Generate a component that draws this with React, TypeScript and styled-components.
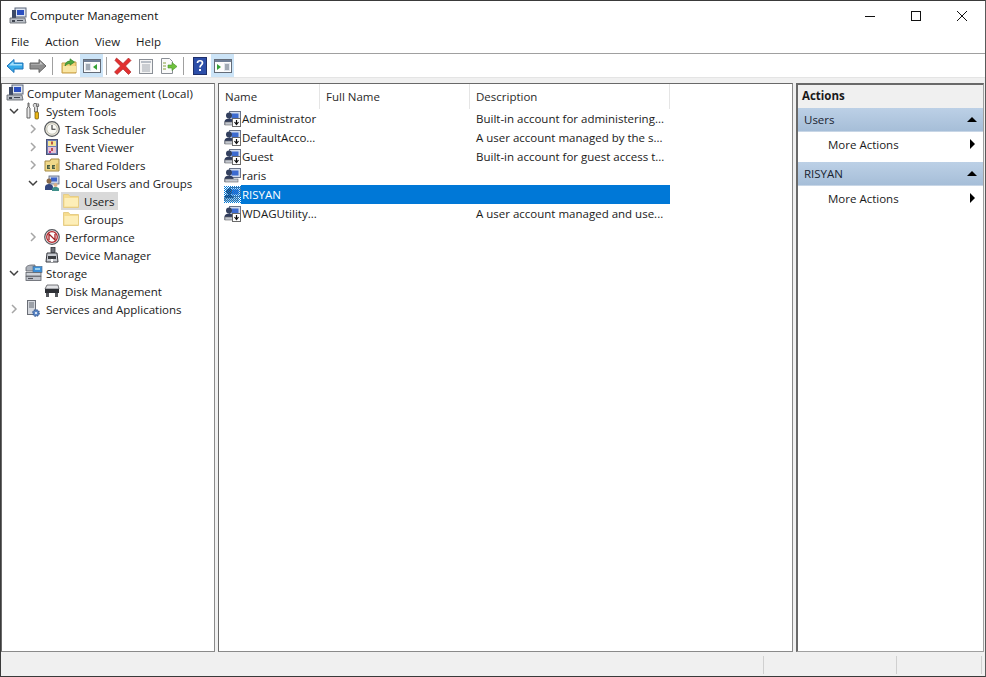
import React from 'react';
import styled, { createGlobalStyle } from 'styled-components';

const GlobalStyle = createGlobalStyle`
    html, body {
        margin: 0;
        padding: 0;
        background: #f0f0f0;
    }
    * {
        box-sizing: border-box;
    }
`;

/* ---------- icons ---------- */

function ComputerIcon() {
    return (
        <svg width="18" height="18" viewBox="0 0 18 18">
            <rect x="6" y="1" width="11" height="9" fill="#dfe6f2" stroke="#5a6478" />
            <rect x="8" y="3" width="7" height="5" fill="#2a4fc0" />
            <path d="M3 3h4v9H3z" fill="#3d4a66" />
            <path d="M1 11h15l1 5H1z" fill="#b9bec6" stroke="#5c6068" strokeWidth="0.8" />
            <path d="M3 13h3v2H3zM8 13h6v1H8z" fill="#404652" />
        </svg>
    );
}

function ToolsIcon() {
    return (
        <svg width="16" height="18" viewBox="0 0 16 18">
            <path d="M3 1v4l-1 1v10h3V6L4 5V1z" fill="#e8e8e8" stroke="#555" strokeWidth="0.9" />
            <path d="M9 1.500c-1 1-1 3 .5 4V10h3V5.500c1.500-1 1.500-3 .5-4v3h-1.500V1.500z" fill="#d8d8d8" stroke="#555" strokeWidth="0.8" />
            <rect x="10" y="10" width="3.500" height="7" rx="1" fill="#e8b417" stroke="#6a5200" strokeWidth="0.7" />
        </svg>
    );
}

function ClockIcon() {
    return (
        <svg width="16" height="16" viewBox="0 0 16 16">
            <circle cx="8" cy="8" r="7.300" fill="#e9e6d8" stroke="#55585c" strokeWidth="1.200" />
            <circle cx="8" cy="8" r="5.200" fill="#fbfbf6" stroke="#a8a89c" strokeWidth="0.6" />
            <path d="M8 4v4.300h3.500" fill="none" stroke="#333" strokeWidth="1.100" />
        </svg>
    );
}

function EventIcon() {
    return (
        <svg width="16" height="16" viewBox="0 0 16 16">
            <rect x="2.500" y="0.500" width="11" height="15" fill="#6f80b8" stroke="#4d5475" />
            <rect x="4" y="2" width="8" height="5" fill="#f4e596" />
            <rect x="4" y="8" width="8" height="6" fill="#e7c3d4" />
            <path d="M8 2.500v3M8 9v3" stroke="#b03030" strokeWidth="1.600" />
            <rect x="5" y="12" width="2" height="2" fill="#c03a8a" />
        </svg>
    );
}

function SharedIcon() {
    return (
        <svg width="16" height="16" viewBox="0 0 16 16">
            <path d="M1 4h5l1-2h8v12H1z" fill="#f0d98a" stroke="#a58a44" />
            <path d="M3 8h3v1.500H4.500v1H6V12H3zM8 8h3v1.500H9.500v1H11V12H8z" fill="#4a5f45" />
            <path d="M12 7l2-1v7h-2z" fill="#d9b95e" />
        </svg>
    );
}

function GroupIcon() {
    return (
        <svg width="16" height="16" viewBox="0 0 16 16">
            <rect x="5" y="1" width="10" height="8" fill="#c9d3e8" stroke="#5a6478" strokeWidth="0.8" />
            <rect x="7" y="2.500" width="6" height="4" fill="#3e63c8" />
            <circle cx="5" cy="6" r="2.500" fill="#8a6a4a" />
            <path d="M1 15v-3c0-2 2-3 4-3s4 1 4 3v3z" fill="#33477f" />
            <circle cx="11.500" cy="10" r="2" fill="#d9b08a" />
            <path d="M8 16v-2c0-1.500 2-2 3.500-2s3.500.5 3.500 2v2z" fill="#3f8f8a" />
        </svg>
    );
}

function FolderIcon() {
    return (
        <svg width="16" height="16" viewBox="0 0 16 16">
            <path d="M.5 1.500h5l1.500 2h8.500v11H.5z" fill="#f6dc8e" stroke="#e6cd87" />
            <path d="M1.500 5h13.500v8.500H1.500z" fill="#fdeeb8" />
        </svg>
    );
}

function PerfIcon() {
    return (
        <svg width="16" height="16" viewBox="0 0 16 16">
            <circle cx="8" cy="8" r="7.300" fill="#f6eeee" stroke="#54565c" strokeWidth="1.200" />
            <circle cx="8" cy="8" r="5.300" fill="#fff" stroke="#b3282d" strokeWidth="1.300" />
            <path d="M5 11V5l6 6V5" fill="none" stroke="#a12024" strokeWidth="1.300" />
        </svg>
    );
}

function DeviceIcon() {
    return (
        <svg width="16" height="16" viewBox="0 0 16 16">
            <rect x="7" y="0.500" width="4" height="5" fill="#6e7178" stroke="#33363c" strokeWidth="0.8" />
            <path d="M3 6h10l1 9H2z" fill="#c9ccd2" stroke="#36383e" />
            <rect x="4" y="9" width="8" height="3" fill="#3b3d42" />
            <path d="M7 12h2v3H7z" fill="#fff" />
        </svg>
    );
}

function StorageIcon() {
    return (
        <svg width="18" height="18" viewBox="0 0 18 18">
            <path d="M1 4c0-2 3-3 6-3h3v6H1z" fill="#aeb3bb" stroke="#5d6068" strokeWidth="0.8" />
            <rect x="8" y="2.500" width="9" height="6" fill="#3c8fd8" stroke="#4a6f95" strokeWidth="0.7" />
            <path d="M10 5h5" stroke="#dff" strokeWidth="1.200" />
            <rect x="1" y="8.500" width="15" height="3.500" fill="#ced2d8" stroke="#5d6068" strokeWidth="0.8" />
            <rect x="1" y="12.500" width="15" height="4" fill="#bfc3ca" stroke="#5d6068" strokeWidth="0.8" />
            <path d="M3 14.500h5" stroke="#50545c" strokeWidth="1.200" />
        </svg>
    );
}

function DiskIcon() {
    return (
        <svg width="16" height="16" viewBox="0 0 16 16">
            <path d="M3 2h11l1 4H1z" fill="#e2e3e6" stroke="#55575c" strokeWidth="0.8" />
            <rect x="1" y="6" width="14" height="4" fill="#2e3035" />
            <rect x="2" y="10" width="3" height="4" fill="#55575c" />
            <rect x="11" y="10" width="3" height="4" fill="#55575c" />
        </svg>
    );
}

function ServicesIcon() {
    return (
        <svg width="16" height="18" viewBox="0 0 16 18">
            <rect x="2.500" y="0.500" width="8" height="14" fill="#d5d8de" stroke="#6a6e76" />
            <path d="M4 3h5M4 5h5M4 7h5" stroke="#656a72" />
            <circle cx="11" cy="13" r="3.200" fill="#5a86c6" stroke="#3f5f94" strokeDasharray="1.500 1" strokeWidth="1.300" />
            <circle cx="11" cy="13" r="1" fill="#fff" />
        </svg>
    );
}

interface UserIconProps {
    $down?: boolean;
    $selected?: boolean;
}

function UserIcon({ $down, $selected }: UserIconProps) {
    return (
        <svg width="17" height="17" viewBox="0 0 17 17">
            <defs>
                <pattern id="hatch" width="2" height="2" patternUnits="userSpaceOnUse">
                    <rect width="1" height="1" fill="#0078d7" />
                    <rect x="1" y="1" width="1" height="1" fill="#0078d7" />
                </pattern>
            </defs>
            <rect x="5.500" y="1.500" width="11" height="9" fill="#d3dcec" stroke="#69748a" />
            <rect x="7.500" y="3.500" width="7" height="5" fill="#3d6bcf" />
            <circle cx="5" cy="5.500" r="3" fill="#33405f" />
            <path d="M.5 15v-3.500C.5 9.500 3 8.500 5 8.500s4.500 1 4.500 3V15z" fill="#303c5c" />
            <rect x="1" y="12" width="13" height="3" fill="#c4c8d0" stroke="#666" strokeWidth="0.6" />
            {$down && (
                <g>
                    <rect x="8.500" y="8.500" width="8" height="8" fill="#fff" stroke="#6a6a6a" />
                    <path d="M12.500 10v4M10.500 12l2 2.500 2-2.500" fill="none" stroke="#111" strokeWidth="1.200" />
                </g>
            )}
            {$selected && <rect width="17" height="17" fill="url(#hatch)" />}
        </svg>
    );
}

function BackIcon() {
    return (
        <svg width="18" height="16" viewBox="0 0 18 16">
            <path d="M1 8l7-6.500V5h9v6H8v3.500z" fill="#36a9e8" stroke="#1c72b8" />
            <path d="M3 7.500L7.500 3.500V6H16v1.500z" fill="#a7e0fb" />
        </svg>
    );
}

function ForwardIcon() {
    return (
        <svg width="18" height="16" viewBox="0 0 18 16">
            <path d="M17 8l-7-6.500V5H1v6h9v3.500z" fill="#8e8e8e" stroke="#666" />
            <path d="M2 6h9V3.500l3 3H2z" fill="#c6c6c6" />
        </svg>
    );
}

function UpIcon() {
    return (
        <svg width="16" height="16" viewBox="0 0 16 16">
            <path d="M1 5h5l1-1h8v11H1z" fill="#f2d27a" stroke="#c49d4b" />
            <path d="M2 8h13v6H2z" fill="#f9e6a4" />
            <path d="M4 8c0-3 2-5 5-5V0.800L13.500 4 9 7.200V5.500C7 5.500 5.500 6.500 4 8z" fill="#4fa83f" stroke="#2c7a27" strokeWidth="0.6" />
        </svg>
    );
}

function ConsoleTreeIcon() {
    return (
        <svg width="18" height="16" viewBox="0 0 18 16">
            <rect x="0.500" y="1.500" width="17" height="13" fill="#fdfdfd" stroke="#646c78" />
            <rect x="1" y="2" width="16" height="2" fill="#6f7f96" />
            <rect x="2" y="5" width="6" height="8" fill="#dfe5ec" />
            <path d="M3 7h4M3 9h4M3 11h4" stroke="#64717f" />
            <path d="M14 6v6l-4-3z" fill="#35a235" />
        </svg>
    );
}

function DeleteIcon() {
    return (
        <svg width="18" height="18" viewBox="0 0 18 18">
            <path d="M2.500 1L9 6.500 14.500 1 17 3.500 11.500 9 17 15l-2.500 2.500L9 12l-6 5.500L.5 15 6.500 9 1 3.500z" fill="#e23030" stroke="#a51f1f" strokeWidth="0.6" />
        </svg>
    );
}

function PropertiesIcon() {
    return (
        <svg width="16" height="16" viewBox="0 0 16 16">
            <rect x="1.500" y="1.500" width="13" height="14" fill="#f5f5f5" stroke="#8a8f96" />
            <rect x="3" y="3" width="10" height="2" fill="#b8bec6" />
            <path d="M4 7h8M4 9h8M4 11h8M4 13h8" stroke="#a0a6ae" />
        </svg>
    );
}

function ExportIcon() {
    return (
        <svg width="18" height="16" viewBox="0 0 18 16">
            <path d="M1.500.5h8l3 3v12h-11z" fill="#fafafa" stroke="#8a8f96" />
            <path d="M3 5h3M3 8h3M3 11h3" stroke="#86a03a" />
            <path d="M8 7h4V4.500L17 8.500l-5 4V10H8z" fill="#6fc13e" stroke="#45902a" strokeWidth="0.6" />
        </svg>
    );
}

function HelpIcon() {
    return (
        <svg width="14" height="18" viewBox="0 0 14 18">
            <rect x="0.500" y="0.500" width="13" height="17" fill="#2c4ea8" stroke="#1e2f6a" />
            <path d="M4.500 6c0-3 5-3 5 0 0 2-2.500 2-2.500 4.500" fill="none" stroke="#fff" strokeWidth="1.700" />
            <rect x="6" y="12" width="2" height="2" fill="#fff" />
        </svg>
    );
}

function ActionPaneIcon() {
    return (
        <svg width="18" height="16" viewBox="0 0 18 16">
            <rect x="0.500" y="1.500" width="17" height="13" fill="#fdfdfd" stroke="#646c78" />
            <rect x="1" y="2" width="16" height="2" fill="#6f7f96" />
            <path d="M3 6v6l4-3z" fill="#35a235" />
            <rect x="10" y="5" width="6" height="8" fill="#dfe5ec" />
            <path d="M11 7h4M11 9h4M11 11h4" stroke="#64717f" />
        </svg>
    );
}

function Chevron({ $open }: { $open: boolean }) {
    return (
        <svg width="12" height="12" viewBox="0 0 12 12">
            {$open ? (
                <path d="M2 4l4 4 4-4" fill="none" stroke="#404040" strokeWidth="1.500" />
            ) : (
                <path d="M4 2l4 4-4 4" fill="none" stroke="#a6a6a6" strokeWidth="1.500" />
            )}
        </svg>
    );
}

/* ---------- data ---------- */

interface TreeEntry {
    label: string;
    indent: number;
    icon: React.ReactNode;
    open?: boolean;
    selected?: boolean;
}

const treeEntries: TreeEntry[] = [
    { label: 'System Tools', indent: 7, icon: <ToolsIcon />, open: true },
    { label: 'Task Scheduler', indent: 26, icon: <ClockIcon />, open: false },
    { label: 'Event Viewer', indent: 26, icon: <EventIcon />, open: false },
    { label: 'Shared Folders', indent: 26, icon: <SharedIcon />, open: false },
    { label: 'Local Users and Groups', indent: 26, icon: <GroupIcon />, open: true },
    { label: 'Users', indent: 45, icon: <FolderIcon />, selected: true },
    { label: 'Groups', indent: 45, icon: <FolderIcon /> },
    { label: 'Performance', indent: 26, icon: <PerfIcon />, open: false },
    { label: 'Device Manager', indent: 26, icon: <DeviceIcon /> },
    { label: 'Storage', indent: 7, icon: <StorageIcon />, open: true },
    { label: 'Disk Management', indent: 26, icon: <DiskIcon /> },
    { label: 'Services and Applications', indent: 7, icon: <ServicesIcon />, open: false },
];

const users = [
    { name: 'Administrator', description: 'Built-in account for administering...', down: true },
    { name: 'DefaultAcco...', description: 'A user account managed by the s...', down: true },
    { name: 'Guest', description: 'Built-in account for guest access t...', down: true },
    { name: 'raris', description: '', down: false },
    { name: 'RISYAN', description: '', down: false, selected: true },
    { name: 'WDAGUtility...', description: 'A user account managed and use...', down: true },
];

/* ---------- page ---------- */

export default function App() {
    return (
        <>
            <GlobalStyle />
            <Window>
                <TitleBar>
                    <ComputerIcon />
                    <TitleText>Computer Management</TitleText>
                    <WindowControls>
                        <WindowButton>
                            <svg width="10" height="10" viewBox="0 0 10 10">
                                <path d="M0 5.500h10" stroke="#111" />
                            </svg>
                        </WindowButton>
                        <WindowButton>
                            <svg width="10" height="10" viewBox="0 0 10 10">
                                <rect x="0.500" y="0.500" width="9" height="9" fill="none" stroke="#111" />
                            </svg>
                        </WindowButton>
                        <WindowButton>
                            <svg width="10" height="10" viewBox="0 0 10 10">
                                <path d="M0 0l10 10M10 0L0 10" stroke="#111" />
                            </svg>
                        </WindowButton>
                    </WindowControls>
                </TitleBar>

                <MenuBar>
                    <MenuItem>File</MenuItem>
                    <MenuItem>Action</MenuItem>
                    <MenuItem>View</MenuItem>
                    <MenuItem>Help</MenuItem>
                </MenuBar>

                <Toolbar>
                    <ToolButton><BackIcon /></ToolButton>
                    <ToolButton><ForwardIcon /></ToolButton>
                    <ToolSeparator />
                    <ToolButton><UpIcon /></ToolButton>
                    <ToolButton $active><ConsoleTreeIcon /></ToolButton>
                    <ToolSeparator />
                    <ToolButton><DeleteIcon /></ToolButton>
                    <ToolButton><PropertiesIcon /></ToolButton>
                    <ToolButton><ExportIcon /></ToolButton>
                    <ToolSeparator />
                    <ToolButton><HelpIcon /></ToolButton>
                    <ToolButton $active><ActionPaneIcon /></ToolButton>
                </Toolbar>

                <Panes>
                    <TreePane>
                        <RootRow>
                            <ComputerIcon />
                            <span>Computer Management (Local)</span>
                        </RootRow>
                        {treeEntries.map((entry) => (
                            <TreeRow key={entry.label} $indent={entry.indent}>
                                <ChevronSlot>
                                    {entry.open !== undefined && <Chevron $open={entry.open} />}
                                </ChevronSlot>
                                <TreeItem $selected={entry.selected}>
                                    <TreeIconSlot>{entry.icon}</TreeIconSlot>
                                    <TreeLabel>{entry.label}</TreeLabel>
                                </TreeItem>
                            </TreeRow>
                        ))}
                    </TreePane>

                    <ListPane>
                        <ListHeader>
                            <HeaderCell $width={101}>Name</HeaderCell>
                            <HeaderCell $width={150}>Full Name</HeaderCell>
                            <HeaderCell $width={200}>Description</HeaderCell>
                        </ListHeader>
                        {users.map((user) => (
                            <UserRow key={user.name}>
                                <UserIconSlot>
                                    <UserIcon $down={user.down} $selected={user.selected} />
                                </UserIconSlot>
                                <UserCells $selected={user.selected}>
                                    <NameCell>{user.name}</NameCell>
                                    <DescriptionCell>{user.description}</DescriptionCell>
                                </UserCells>
                            </UserRow>
                        ))}
                    </ListPane>

                    <ActionsPane>
                        <ActionsTitle>Actions</ActionsTitle>
                        <ActionSection>
                            <SectionHeader>
                                Users
                                <CollapseArrow />
                            </SectionHeader>
                            <ActionItem>
                                More Actions
                                <ExpandArrow />
                            </ActionItem>
                        </ActionSection>
                        <ActionSection>
                            <SectionHeader>
                                RISYAN
                                <CollapseArrow />
                            </SectionHeader>
                            <ActionItem>
                                More Actions
                                <ExpandArrow />
                            </ActionItem>
                        </ActionSection>
                    </ActionsPane>
                </Panes>

                <StatusBar>
                    <StatusCell $width={133} />
                    <StatusCell $width={85} />
                    <StatusEnd />
                </StatusBar>
            </Window>
        </>
    );
}

const Window = styled.div`
    display: flex;
    flex-direction: column;
    width: 986px;
    height: 677px;
    overflow: hidden;
    background: #f0f0f0;
    border: 1px solid #3a3a3a;
    border-right-color: #5a5a5a;
    font-family: 'Open Sans', 'Noto Sans', sans-serif;
    font-size: 11.5px;
    color: #1a1a1a;
`;

const TitleBar = styled.div`
    display: flex;
    align-items: center;
    flex: none;
    height: 29px;
    padding-left: 8px;
    background: #fff;
`;

const TitleText = styled.span`
    margin-left: 3px;
    color: #111;
`;

const WindowControls = styled.div`
    display: flex;
    margin-left: auto;
    align-self: stretch;
`;

const WindowButton = styled.div`
    display: flex;
    align-items: center;
    justify-content: center;
    width: 46px;
`;

const MenuBar = styled.div`
    display: flex;
    align-items: center;
    flex: none;
    height: 24px;
    padding-left: 2px;
    background: #fff;
    border-bottom: 1px solid #a0a0a0;
`;

const MenuItem = styled.span`
    padding: 0 8px;
`;

const Toolbar = styled.div`
    display: flex;
    align-items: center;
    flex: none;
    height: 24px;
    padding-left: 2px;
    background: #fff;
    border-bottom: 1px solid #e4e4e4;
`;

const ToolButton = styled.div<{ $active?: boolean }>`
    display: flex;
    align-items: center;
    justify-content: center;
    width: 23px;
    height: 23px;
    background: ${(p) => (p.$active ? '#cce4f7' : 'transparent')};
`;

const ToolSeparator = styled.div`
    width: 1px;
    height: 18px;
    margin: 0 4px 0 3px;
    background: #a0a0a0;
`;

const Panes = styled.div`
    display: flex;
    flex: 1;
    min-height: 0;
    gap: 3px;
    padding: 5px 1px 2px 0;
`;

const TreePane = styled.div`
    flex: none;
    width: 214px;
    background: #fff;
    border: 1px solid #8a8a8a;
    border-top-color: #696969;
    border-left-color: #696969;
`;

const RootRow = styled.div`
    display: flex;
    align-items: center;
    gap: 3px;
    height: 18px;
    padding-left: 4px;
    white-space: nowrap;
`;

const TreeRow = styled.div<{ $indent: number }>`
    display: flex;
    align-items: center;
    height: 18px;
    padding-left: ${(p) => p.$indent - 1}px;
    white-space: nowrap;
`;

const ChevronSlot = styled.span`
    display: flex;
    flex: none;
    width: 12px;
    height: 12px;
    margin-right: 3px;
`;

const TreeItem = styled.span<{ $selected?: boolean }>`
    display: flex;
    align-items: center;
    height: 18px;
    padding-left: 2px;
    background: ${(p) => (p.$selected ? '#d9d9d9' : 'transparent')};
`;

const TreeIconSlot = styled.span`
    display: flex;
    flex: none;
    width: 18px;
`;

const TreeLabel = styled.span`
    padding: 0 3px;
`;

const ListPane = styled.div`
    flex: none;
    width: 575px;
    background: #fff;
    border: 1px solid #8a8a8a;
    border-top-color: #696969;
    border-left-color: #696969;
`;

const ListHeader = styled.div`
    display: flex;
    height: 25px;
`;

const HeaderCell = styled.div<{ $width: number }>`
    flex: none;
    width: ${(p) => p.$width}px;
    padding-left: 6px;
    line-height: 25px;
    color: #2a2a2a;
    border-right: 1px solid #e5e5e5;
`;

const UserRow = styled.div`
    display: flex;
    align-items: center;
    height: 19px;
    padding-left: 5px;
`;

const UserIconSlot = styled.span`
    display: flex;
    flex: none;
    width: 17px;
`;

const UserCells = styled.div<{ $selected?: boolean }>`
    display: flex;
    width: 429px;
    height: 19px;
    line-height: 19px;
    color: ${(p) => (p.$selected ? '#fff' : '#1a1a1a')};
    background: ${(p) => (p.$selected ? '#0078d7' : 'transparent')};
`;

const NameCell = styled.span`
    flex: none;
    width: 235px;
    padding-left: 1px;
    white-space: nowrap;
`;

const DescriptionCell = styled.span`
    white-space: nowrap;
`;

const ActionsPane = styled.div`
    flex: 1;
    min-width: 0;
    background: #fff;
    border: 1px solid #a0a0a0;
    border-top: 2px solid #696969;
    border-left: 2px solid #696969;
`;

const ActionsTitle = styled.div`
    height: 23px;
    padding-left: 4px;
    line-height: 21px;
    font-weight: 700;
    background: #f0f0f0;
`;

const ActionSection = styled.section`
    margin-bottom: 6px;
`;

const SectionHeader = styled.div`
    display: flex;
    align-items: center;
    justify-content: space-between;
    height: 24px;
    padding: 0 6px 1px 6px;
    color: #1a2430;
    background: linear-gradient(#bcd0e6, #a6bed8);
    border-bottom: 1px solid #c8d6e6;
`;

const CollapseArrow = styled.span`
    width: 0;
    height: 0;
    border-left: 5px solid transparent;
    border-right: 5px solid transparent;
    border-bottom: 5px solid #000;
`;

const ExpandArrow = styled.span`
    width: 0;
    height: 0;
    margin-right: 2px;
    border-top: 5px solid transparent;
    border-bottom: 5px solid transparent;
    border-left: 5px solid #000;
`;

const ActionItem = styled.div`
    display: flex;
    align-items: center;
    justify-content: space-between;
    height: 24px;
    padding: 0 6px 0 30px;
`;

const StatusBar = styled.div`
    display: flex;
    align-items: stretch;
    justify-content: flex-end;
    flex: none;
    height: 22px;
    padding: 2px 3px 2px 0;
    background: #f0f0f0;
`;

const StatusCell = styled.div<{ $width: number }>`
    flex: none;
    width: ${(p) => p.$width}px;
    border-left: 1px solid #d0d0d0;
`;

const StatusEnd = styled.div`
    width: 1px;
    background: #d0d0d0;
`;
